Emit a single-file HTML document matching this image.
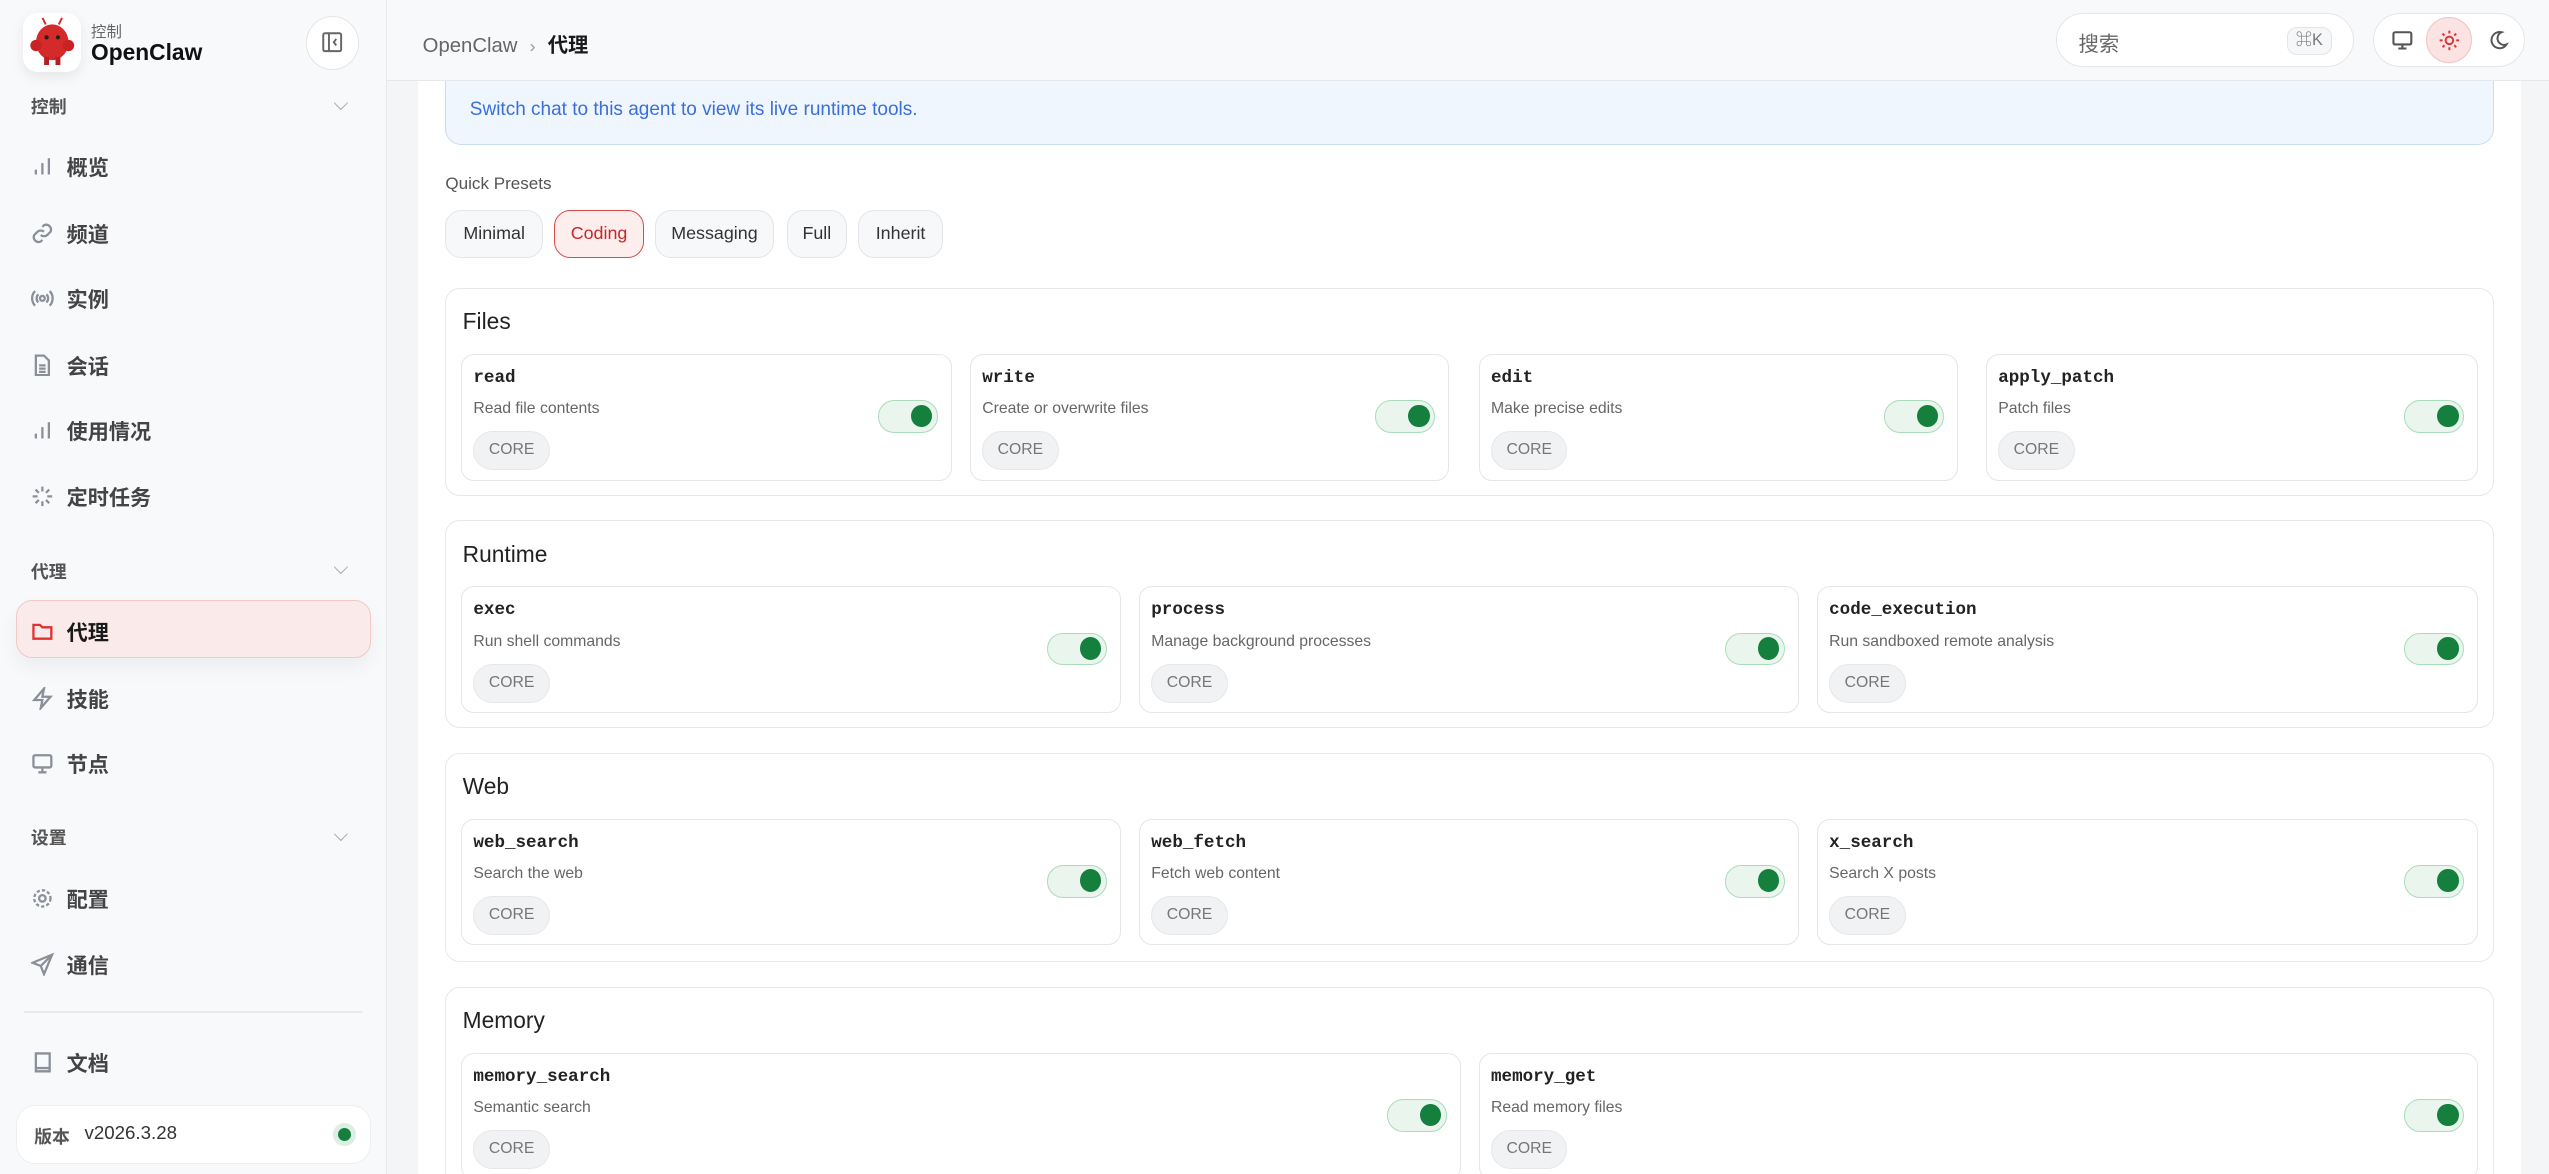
<!DOCTYPE html>
<html><head><meta charset="utf-8"><style>
*{box-sizing:border-box;margin:0;padding:0}
html,body{width:2549px;height:1174px;overflow:hidden;background:#f4f5f7}
#w{zoom:1.6256;width:1568px;height:722px;position:relative;font-family:"Liberation Sans","Noto Sans CJK SC",sans-serif;color:#222}
.a{position:absolute}
#side{left:0;top:0;width:238px;height:722px;background:#f8f9fb;border-right:1px solid #e8eaee}
.lab{position:absolute;left:19px;font-size:11px;font-weight:700;color:#555}
.chev{position:absolute;left:207px;width:6px;height:6px;border-right:1px solid #aaa;border-bottom:1px solid #aaa;transform:rotate(45deg)}
.nav{position:absolute;left:19px;font-size:13px;color:#444;font-weight:700;display:flex;align-items:center;gap:8px}
.nav svg{width:14px;height:14px;stroke:#8a8f98;fill:none;stroke-width:1.4}
#panel{left:257px;top:50px;width:1294px;height:672px;background:#fff}
.sec{position:absolute;left:274px;width:1260px;border:1px solid #e6e8eb;border-radius:9px;background:#fff}
.sec h3{position:absolute;left:10px;top:12px;font-size:14px;font-weight:400;color:#222}
.card{position:absolute;top:40px;height:78px;border:1px solid #e4e6ea;border-radius:8px;background:#fff}
.card .n{position:absolute;left:7px;top:8px;font-family:"Liberation Mono",monospace;font-weight:700;font-size:10.8px;color:#222}
.card .d{position:absolute;left:7px;top:28px;font-size:9.7px;color:#666}
.card .c{position:absolute;left:7px;top:47px;width:47px;height:24px;border-radius:12px;background:#f1f2f4;border:1px solid #e6e7ea;font-size:9.7px;color:#777;text-align:center;line-height:22px}
.card .t{position:absolute;right:8px;top:28px;width:37px;height:20px;border-radius:10px;background:#eaf5ee;border:1px solid #a9dcba}
.card .t:after{content:"";position:absolute;right:3px;top:2px;width:13px;height:14px;border-radius:50%;background:#15803d}
.btn{position:absolute;top:129px;height:30px;border:1px solid #e3e5e8;border-radius:10px;background:#f7f8fa;font-size:11px;color:#333;text-align:center;line-height:28px}
</style></head><body><div id="w">
<div class="a" id="side">
 <div class="a" style="left:14px;top:8px;width:36px;height:36px;border-radius:9px;background:#fff;box-shadow:0 3px 8px rgba(0,0,0,.08)">
  <svg width="36" height="36" viewBox="0 0 36 36"><ellipse cx="18" cy="18" rx="10" ry="11" fill="#d42a2a"/><circle cx="8" cy="20" r="3.5" fill="#c82222"/><circle cx="28" cy="20" r="3.5" fill="#c82222"/><rect x="13" y="27" width="3" height="5" fill="#b51f1f"/><rect x="20" y="27" width="3" height="5" fill="#b51f1f"/><circle cx="14.5" cy="15" r="1.3" fill="#222"/><circle cx="21.5" cy="15" r="1.3" fill="#222"/><path d="M14 7 L12 3 M22 7 L24 3" stroke="#d42a2a" stroke-width="1.2"/></svg>
 </div>
 <div class="a" style="left:56px;top:12px;font-size:9.5px;color:#666">控制</div>
 <div class="a" style="left:56px;top:24px;font-size:14px;font-weight:700;color:#111">OpenClaw</div>
 <div class="a" style="left:188px;top:10px;width:33px;height:33px;border-radius:50%;border:1px solid #e3e5e8;background:#fff"><svg width="31" height="31" viewBox="0 0 31 31" fill="none" stroke="#666" stroke-width="1.2"><rect x="10" y="10" width="11" height="11" rx="1"/><path d="M13.5 10v11M18 13.5l-1.5 2 1.5 2"/></svg></div>
 <div class="lab" style="top:57px">控制</div><div class="chev" style="top:60px"></div>
 <div class="nav" style="top:93px"><svg viewBox="0 0 14 14"><path d="M3 12V9M7 12V5M11 12V2"/></svg>概览</div>
 <div class="nav" style="top:134px"><svg viewBox="0 0 14 14"><path d="M6 8a3 3 0 0 0 4 0l2-2a3 3 0 0 0-4-4l-1 1M8 6a3 3 0 0 0-4 0l-2 2a3 3 0 0 0 4 4l1-1"/></svg>频道</div>
 <div class="nav" style="top:174px"><svg viewBox="0 0 14 14"><circle cx="7" cy="7" r="1.5"/><path d="M4.5 4.5a3.5 3.5 0 0 0 0 5M9.5 4.5a3.5 3.5 0 0 1 0 5M2.5 2.5a6.5 6.5 0 0 0 0 9M11.5 2.5a6.5 6.5 0 0 1 0 9"/></svg>实例</div>
 <div class="nav" style="top:215px"><svg viewBox="0 0 14 14"><path d="M3 1h5l3 3v9H3zM5 7h4M5 9h4M5 11h4"/></svg>会话</div>
 <div class="nav" style="top:255px"><svg viewBox="0 0 14 14"><path d="M3 12V9M7 12V5M11 12V2"/></svg>使用情况</div>
 <div class="nav" style="top:296px"><svg viewBox="0 0 14 14"><path d="M7 1v3M7 10v3M1 7h3M10 7h3M2.8 2.8l2 2M9.2 9.2l2 2M2.8 11.2l2-2M9.2 4.8l2-2"/></svg>定时任务</div>
 <div class="lab" style="top:343px">代理</div><div class="chev" style="top:346px"></div>
 <div class="a" style="left:10px;top:369px;width:218px;height:36px;border-radius:10px;background:#fbeaea;border:1px solid #f2c8c8;box-shadow:0 6px 12px rgba(0,0,0,.05)"></div>
 <div class="nav" style="top:379px;color:#1a1a1a"><svg viewBox="0 0 14 14" style="stroke:#d33"><path d="M1.5 3h4l1.5 1.5h5.5v7h-11z"/></svg>代理</div>
 <div class="nav" style="top:420px"><svg viewBox="0 0 14 14"><path d="M8 1L2 8h5l-1 5 6-7H7z"/></svg>技能</div>
 <div class="nav" style="top:460px"><svg viewBox="0 0 14 14"><rect x="1.5" y="2" width="11" height="7.5" rx="1"/><path d="M7 9.5v3M4.5 12.5h5"/></svg>节点</div>
 <div class="lab" style="top:507px">设置</div><div class="chev" style="top:510px"></div>
 <div class="nav" style="top:543px"><svg viewBox="0 0 14 14"><circle cx="7" cy="7" r="2"/><circle cx="7" cy="7" r="5" stroke-dasharray="2 1.3"/></svg>配置</div>
 <div class="nav" style="top:584px"><svg viewBox="0 0 14 14"><path d="M13 1L1 6l5 2 2 5z M6 8l7-7"/></svg>通信</div>
 <div class="a" style="left:15px;top:622px;width:208px;height:1px;background:#e8eaee"></div>
 <div class="nav" style="top:644px"><svg viewBox="0 0 14 14"><path d="M3 1.5h8.5v11H3zM3 10.5h8.5"/></svg>文档</div>
 <div class="a" style="left:10px;top:680px;width:218px;height:36px;border-radius:12px;background:#fff;border:1px solid #eceef1"></div>
 <div class="a" style="left:21px;top:691px;font-size:11px;color:#555;font-weight:700">版本</div>
 <div class="a" style="left:52px;top:690px;font-size:11.5px;color:#333">v2026.3.28</div>
 <div class="a" style="left:205px;top:691px;width:14px;height:14px;border-radius:50%;background:#dcefe2"></div>
 <div class="a" style="left:208px;top:694px;width:8px;height:8px;border-radius:50%;background:#15803d"></div>
</div>
<div class="a" id="panel"></div>
<div class="a" style="left:274px;top:40px;width:1260px;height:49px;border-radius:0 0 10px 10px;background:#f0f6fd;border:1px solid #cadcf3;border-top:none"></div>
<div class="a" style="left:238px;top:0;width:1330px;height:50px;background:#f8f9fb;border-bottom:1px solid #e6e8ec"></div>
<div class="a" style="left:260px;top:17px;font-size:12.5px;color:#666">OpenClaw <span style="color:#999;font-size:11px;margin:0 4px">›</span> <b style="color:#1a1a1a">代理</b></div>
<div class="a" style="left:289px;top:61px;font-size:11.7px;color:#3a6fd8">Switch chat to this agent to view its live runtime tools.</div>
<div class="a" style="left:274px;top:107px;font-size:10.5px;color:#555">Quick Presets</div>
<div class="btn" style="left:274px;width:60px">Minimal</div>
<div class="btn" style="left:341px;width:55px;background:#fdeeee;border-color:#d94a4a;color:#c62828">Coding</div>
<div class="btn" style="left:403px;width:73px">Messaging</div>
<div class="btn" style="left:484px;width:37px">Full</div>
<div class="btn" style="left:528px;width:52px">Inherit</div>

<div class="sec" style="top:177px;height:128px"><h3>Files</h3>
 <div class="card" style="left:9px;width:302px"><div class="n">read</div><div class="d">Read file contents</div><div class="c">CORE</div><div class="t"></div></div>
 <div class="card" style="left:322px;width:295px"><div class="n">write</div><div class="d">Create or overwrite files</div><div class="c">CORE</div><div class="t"></div></div>
 <div class="card" style="left:635px;width:295px"><div class="n">edit</div><div class="d">Make precise edits</div><div class="c">CORE</div><div class="t"></div></div>
 <div class="card" style="left:947px;width:303px"><div class="n">apply_patch</div><div class="d">Patch files</div><div class="c">CORE</div><div class="t"></div></div>
</div>
<div class="sec" style="top:320px;height:128px"><h3>Runtime</h3>
 <div class="card" style="left:9px;width:406px"><div class="n">exec</div><div class="d">Run shell commands</div><div class="c">CORE</div><div class="t"></div></div>
 <div class="card" style="left:426px;width:406px"><div class="n">process</div><div class="d">Manage background processes</div><div class="c">CORE</div><div class="t"></div></div>
 <div class="card" style="left:843px;width:407px"><div class="n">code_execution</div><div class="d">Run sandboxed remote analysis</div><div class="c">CORE</div><div class="t"></div></div>
</div>
<div class="sec" style="top:463px;height:129px"><h3>Web</h3>
 <div class="card" style="left:9px;width:406px"><div class="n">web_search</div><div class="d">Search the web</div><div class="c">CORE</div><div class="t"></div></div>
 <div class="card" style="left:426px;width:406px"><div class="n">web_fetch</div><div class="d">Fetch web content</div><div class="c">CORE</div><div class="t"></div></div>
 <div class="card" style="left:843px;width:407px"><div class="n">x_search</div><div class="d">Search X posts</div><div class="c">CORE</div><div class="t"></div></div>
</div>
<div class="sec" style="top:607px;height:140px"><h3>Memory</h3>
 <div class="card" style="left:9px;width:615px"><div class="n">memory_search</div><div class="d">Semantic search</div><div class="c">CORE</div><div class="t"></div></div>
 <div class="card" style="left:635px;width:615px"><div class="n">memory_get</div><div class="d">Read memory files</div><div class="c">CORE</div><div class="t"></div></div>
</div>
<div class="a" style="left:1265px;top:8px;width:183px;height:33px;border-radius:17px;background:#fff;border:1px solid #e4e6ea"><span class="a" style="left:13px;top:8px;font-size:12.5px;color:#666">搜索</span><span class="a" style="left:141px;top:8px;width:28px;height:17px;border:1px solid #e3e5e8;border-radius:6px;background:#f6f7f9;font-size:10px;color:#777;text-align:center;line-height:15px">⌘K</span></div>
<div class="a" style="left:1460px;top:8px;width:93px;height:33px;border-radius:17px;background:#fff;border:1px solid #e4e6ea">
  <svg class="a" style="left:10px;top:9px" width="14" height="14" viewBox="0 0 14 14" fill="none" stroke="#555" stroke-width="1.3"><rect x="1.5" y="2" width="11" height="7.5" rx="1"/><path d="M7 9.5v2.5M4.5 12h5"/></svg>
  <div class="a" style="left:32px;top:2px;width:28px;height:28px;border-radius:50%;background:#fbe3e3;border:1px solid #f3c3c3"></div>
  <svg class="a" style="left:39px;top:9px" width="14" height="14" viewBox="0 0 14 14" fill="none" stroke="#d33" stroke-width="1.2"><circle cx="7" cy="7" r="2.3"/><path d="M7 1v1.8M7 11.2V13M1 7h1.8M11.2 7H13M2.8 2.8l1.2 1.2M10 10l1.2 1.2M2.8 11.2L4 10M10 4l1.2-1.2"/></svg>
  <svg class="a" style="left:69px;top:9px" width="14" height="14" viewBox="0 0 14 14" fill="none" stroke="#555" stroke-width="1.2"><path d="M9 2a5 5 0 1 0 3 7.5A4 4 0 0 1 9 2z"/></svg>
</div>
</div></body></html>
